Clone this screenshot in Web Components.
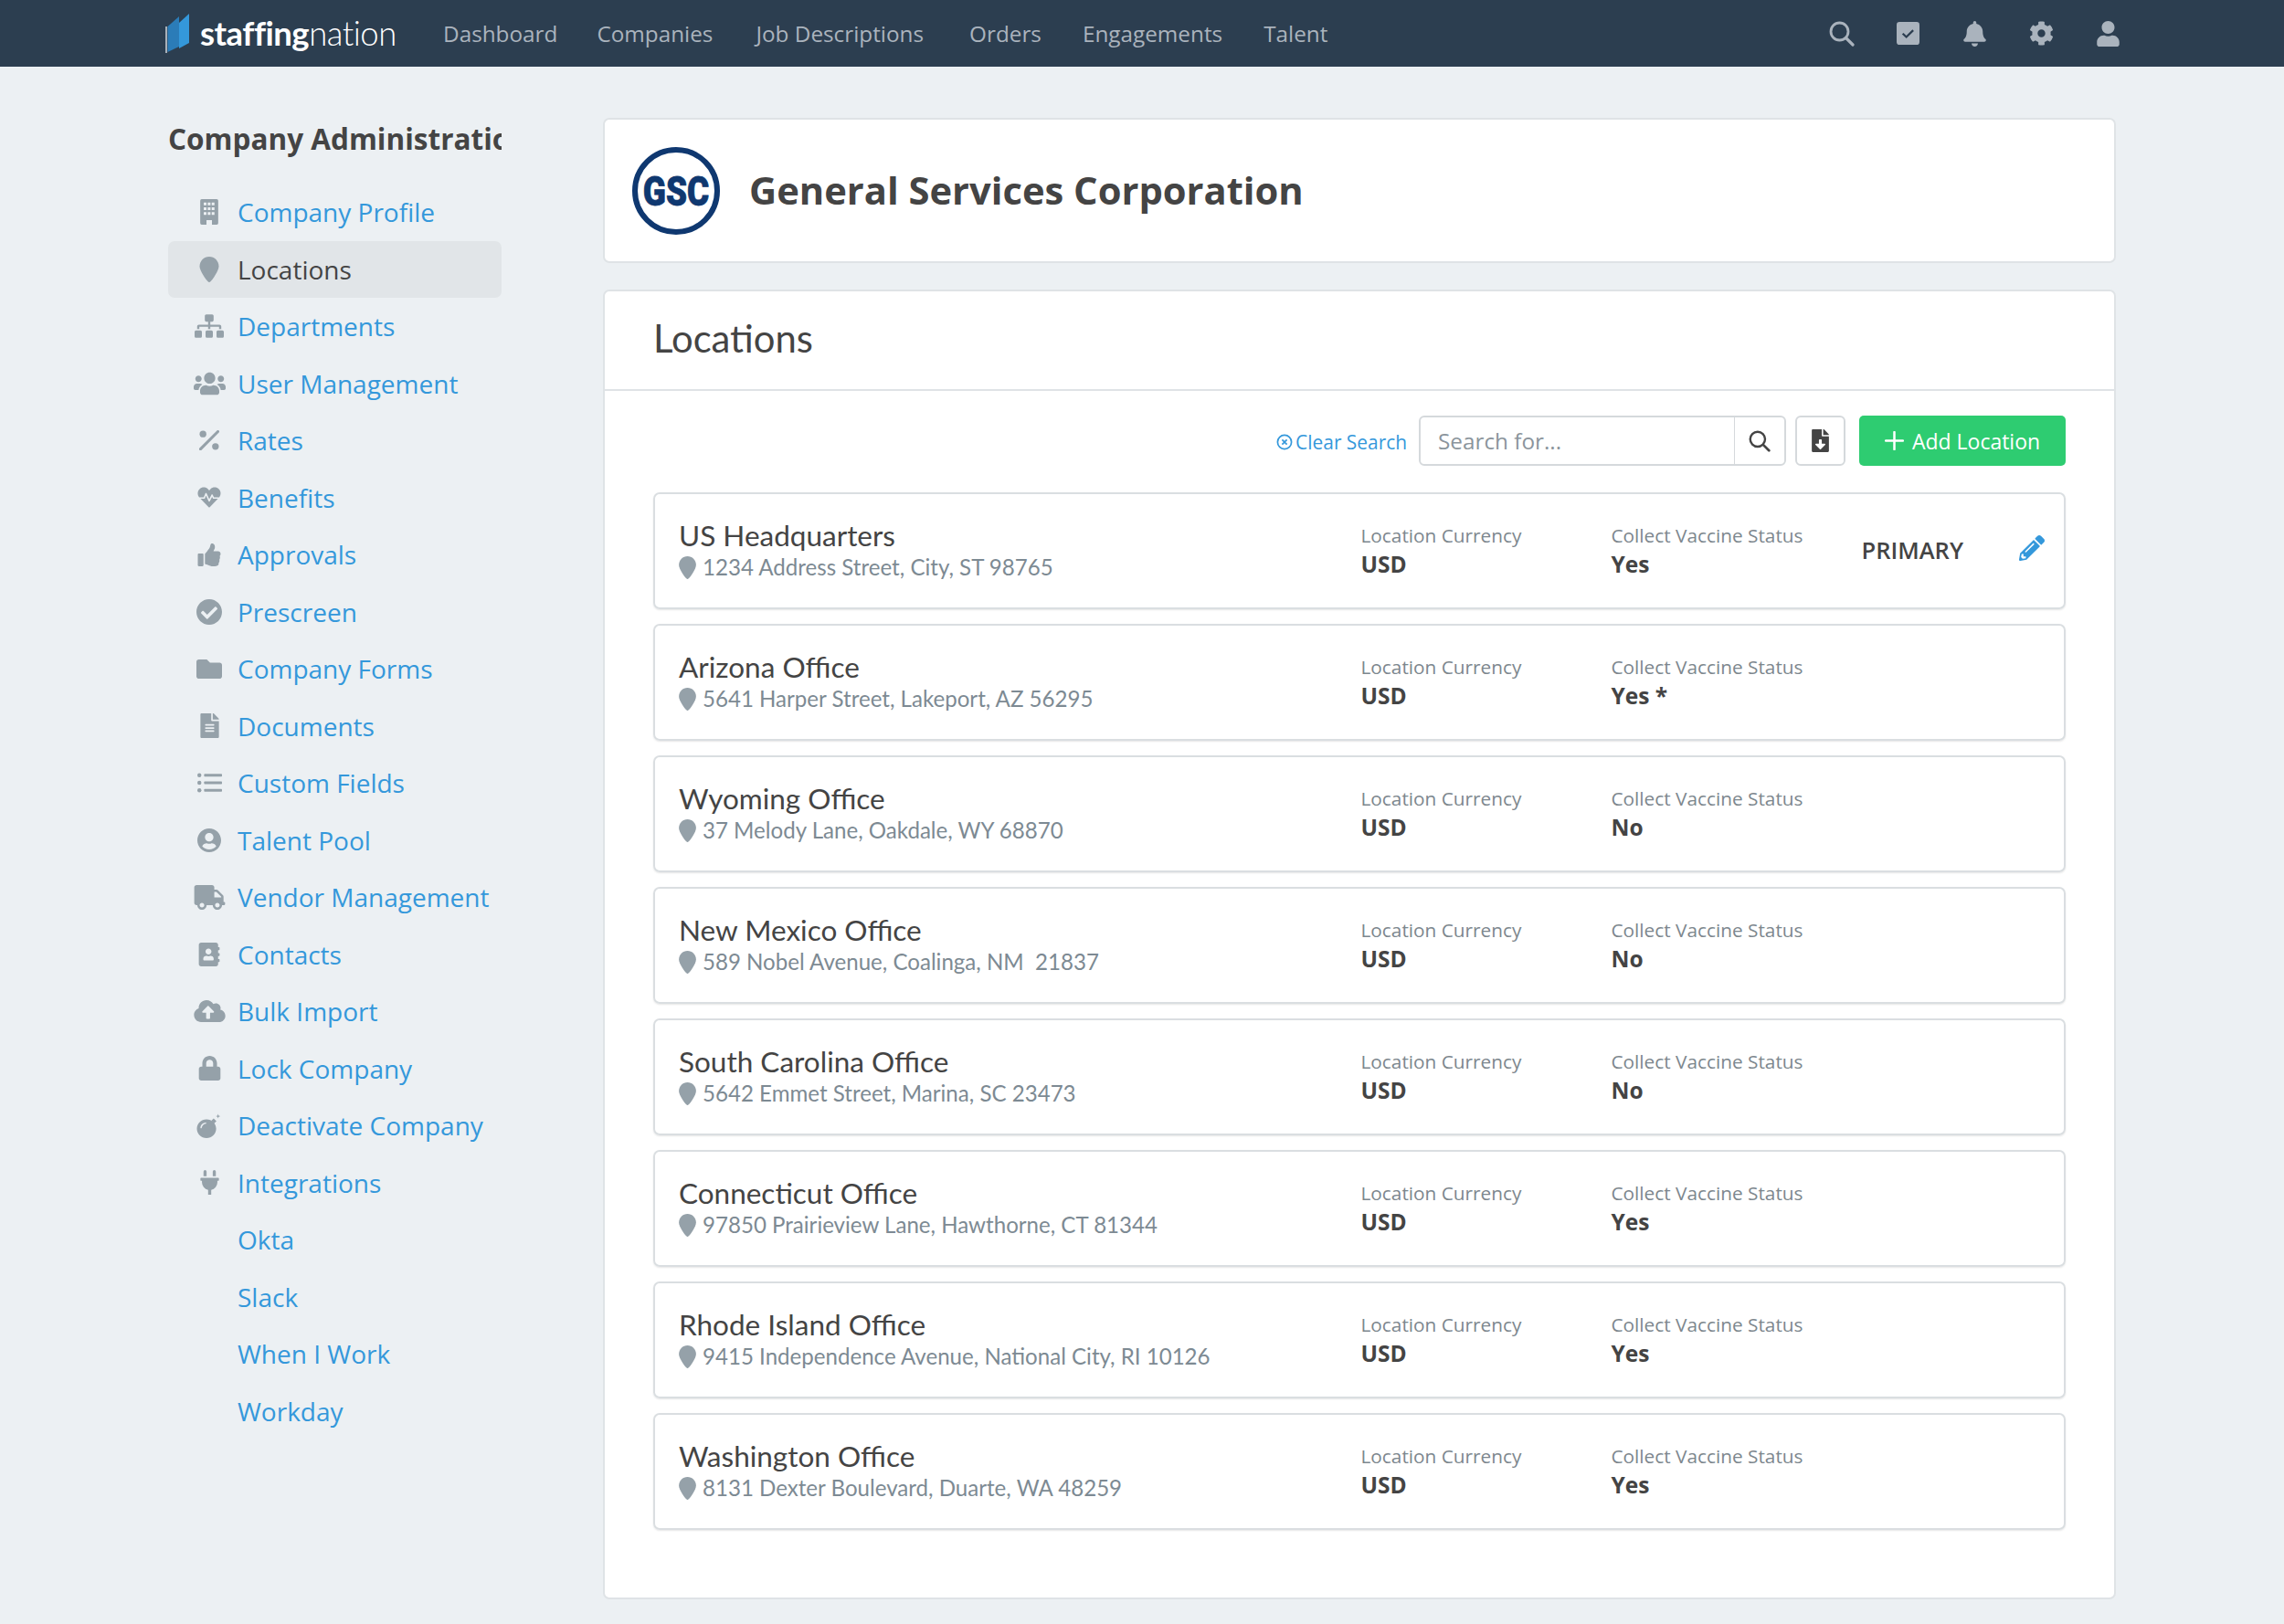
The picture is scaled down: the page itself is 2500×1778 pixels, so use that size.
<!DOCTYPE html>
<html lang="en">
<head>
<meta charset="utf-8">
<title>Locations</title>
<style>
  html, body { margin: 0; background: #ecf0f3; }
  body { font-family: "Open Sans", sans-serif; color: #444; }
</style>
</head>
<body>
<sn-app>
  <sn-topbar slot="top"></sn-topbar>
  <sn-side-nav slot="side" heading="Company Administration">
    <sn-nav-item icon="building" w="20" h="28">Company Profile</sn-nav-item>
    <sn-nav-item icon="pin" w="22" h="28" active>Locations</sn-nav-item>
    <sn-nav-item icon="sitemap" w="32" h="26">Departments</sn-nav-item>
    <sn-nav-item icon="users" w="35" h="28">User Management</sn-nav-item>
    <sn-nav-item icon="percent" w="22" h="22">Rates</sn-nav-item>
    <sn-nav-item icon="heartbeat" w="28" h="25">Benefits</sn-nav-item>
    <sn-nav-item icon="thumbs" w="28" h="25">Approvals</sn-nav-item>
    <sn-nav-item icon="check-circle" w="28" h="28">Prescreen</sn-nav-item>
    <sn-nav-item icon="folder" w="28" h="25">Company Forms</sn-nav-item>
    <sn-nav-item icon="file-alt" w="21" h="27">Documents</sn-nav-item>
    <sn-nav-item icon="list" w="27" h="22">Custom Fields</sn-nav-item>
    <sn-nav-item icon="user-circle" w="28" h="26">Talent Pool</sn-nav-item>
    <sn-nav-item icon="truck" w="35" h="27">Vendor Management</sn-nav-item>
    <sn-nav-item icon="contact" w="26" h="26">Contacts</sn-nav-item>
    <sn-nav-item icon="cloud" w="35" h="24">Bulk Import</sn-nav-item>
    <sn-nav-item icon="lock" w="25" h="27">Lock Company</sn-nav-item>
    <sn-nav-item icon="bomb" w="28" h="27">Deactivate Company</sn-nav-item>
    <sn-nav-item icon="plug" w="21" h="27">Integrations</sn-nav-item>
    <sn-nav-item>Okta</sn-nav-item>
    <sn-nav-item>Slack</sn-nav-item>
    <sn-nav-item>When I Work</sn-nav-item>
    <sn-nav-item>Workday</sn-nav-item>
  </sn-side-nav>
  <sn-company-header slot="main">General Services Corporation</sn-company-header>
  <sn-panel slot="main" heading="Locations">
    <sn-toolbar></sn-toolbar>
    <sn-location name="US Headquarters" address="1234 Address Street, City, ST 98765" vaccine="Yes" primary></sn-location>
    <sn-location name="Arizona Office" address="5641 Harper Street, Lakeport, AZ 56295" vaccine="Yes *"></sn-location>
    <sn-location name="Wyoming Office" address="37 Melody Lane, Oakdale, WY 68870" vaccine="No"></sn-location>
    <sn-location name="New Mexico Office" address="589 Nobel Avenue, Coalinga, NM  21837" vaccine="No"></sn-location>
    <sn-location name="South Carolina Office" address="5642 Emmet Street, Marina, SC 23473" vaccine="No"></sn-location>
    <sn-location name="Connecticut Office" address="97850 Prairieview Lane, Hawthorne, CT 81344" vaccine="Yes"></sn-location>
    <sn-location name="Rhode Island Office" address="9415 Independence Avenue, National City, RI 10126" vaccine="Yes"></sn-location>
    <sn-location name="Washington Office" address="8131 Dexter Boulevard, Duarte, WA 48259" vaccine="Yes"></sn-location>
  </sn-panel>
</sn-app>

<script>
// building windows are punched out of the block, easier to loop than to write by hand
let windows = '';
for (const y of [70, 165, 260]) {
  for (const x of [70, 150, 230]) windows += `M${x} ${y}h55v55h-55z`;
}

const ICONS = {
  building: ['0 0 360 512', `<path fill-rule="evenodd" d="M30 0h300a30 30 0 0 1 30 30v452a30 30 0 0 1-30 30h-95v-90h-110v90H30a30 30 0 0 1-30-30V30A30 30 0 0 1 30 0z${windows}"/>`],
  pin: ['0 0 384 512', '<path d="M192 0C86 0 0 86 0 192c0 90 120 260 172 312 11 11 29 11 40 0C264 452 384 282 384 192 384 86 298 0 192 0z"/>'],
  sitemap: ['0 0 640 512', '<path d="M128 352H32c-17.67 0-32 14.33-32 32v96c0 17.67 14.33 32 32 32h96c17.67 0 32-14.33 32-32v-96c0-17.67-14.33-32-32-32zm-24-80h192v48h48v-48h192v48h48v-57.59c0-21.17-17.23-38.41-38.41-38.41H344v-64h40c17.67 0 32-14.33 32-32V32c0-17.67-14.33-32-32-32H256c-17.67 0-32 14.33-32 32v96c0 17.67 14.33 32 32 32h40v64H94.41C73.23 224 56 241.23 56 262.41V320h48v-48zm264 80h-96c-17.67 0-32 14.33-32 32v96c0 17.67 14.33 32 32 32h96c17.67 0 32-14.33 32-32v-96c0-17.67-14.33-32-32-32zm240 0h-96c-17.67 0-32 14.33-32 32v96c0 17.67 14.33 32 32 32h96c17.67 0 32-14.33 32-32v-96c0-17.67-14.33-32-32-32z"/>'],
  users: ['0 0 640 512', '<path d="M96 224c35.3 0 64-28.7 64-64s-28.7-64-64-64-64 28.7-64 64 28.7 64 64 64zm448 0c35.3 0 64-28.7 64-64s-28.7-64-64-64-64 28.7-64 64 28.7 64 64 64zm32 32h-64c-17.6 0-33.5 7.1-45.1 18.6 40.3 22.1 68.9 62 75.1 109.4h66c17.7 0 32-14.3 32-32v-32c0-35.3-28.7-64-64-64zm-256 0c61.9 0 112-50.1 112-112S381.9 32 320 32 208 82.1 208 144s50.1 112 112 112zm76.8 32h-8.3c-20.8 10-43.9 16-68.5 16s-47.6-6-68.5-16h-8.3C179.6 288 128 339.6 128 403.2V432c0 26.5 21.5 48 48 48h288c26.5 0 48-21.5 48-48v-28.8c0-63.6-51.6-115.2-115.2-115.2zm-223.7-13.4C161.5 263.1 145.6 256 128 256H64c-35.3 0-64 28.7-64 64v32c0 17.7 14.3 32 32 32h65.9c6.3-47.4 34.9-87.3 75.2-109.4z"/>'],
  percent: ['0 0 448 448', '<circle cx="85" cy="85" r="75"/><circle cx="363" cy="363" r="75"/><path d="M30 420L418 30" stroke="currentColor" stroke-width="62" stroke-linecap="round"/>'],
  heartbeat: ['0 0 512 512', '<path d="M320.2 243.8l-49.7 99.4c-6 12.1-23.4 11.7-28.9-.6l-56.9-126.3-30 71.7H60.6l182.5 186.5c7.1 7.3 18.6 7.3 25.7 0L451.4 288H342.3l-22.1-44.2zM473.7 73.9l-2.4-2.5c-51.5-52.6-135.8-52.6-187.4 0L256 100l-27.9-28.5c-51.5-52.7-135.9-52.7-187.4 0l-2.4 2.4C-10.4 123.6-12.5 202.3 31 256h102.4l35.9-86.2c5.4-12.9 23.6-13.2 29.4-.4l58.2 129.3 49-97.9c5.9-11.8 22.7-11.8 28.6 0l27.6 55.2H481c43.5-53.7 41.4-132.4-7.3-182.1z"/>'],
  thumbs: ['0 0 512 512', '<path d="M104 224H24c-13.255 0-24 10.745-24 24v240c0 13.255 10.745 24 24 24h80c13.255 0 24-10.745 24-24V248c0-13.255-10.745-24-24-24zM384 81.452c0 42.416-25.97 66.208-33.277 94.548h101.723c33.397 0 59.397 27.746 59.553 58.098.084 17.938-7.546 37.249-19.439 49.197l-.11.11c9.836 23.337 8.237 56.037-9.308 79.469 8.681 25.895-.069 57.704-16.382 74.757 4.298 17.598 2.244 32.575-6.148 44.632C440.202 511.587 389.616 512 346.839 512l-2.845-.001c-48.287-.017-87.806-17.598-119.56-31.725-15.957-7.099-36.821-15.887-52.651-16.178-6.54-.12-11.783-5.457-11.783-11.998v-213.77c0-3.2 1.282-6.271 3.558-8.521 39.614-39.144 56.648-80.587 89.117-113.111 14.804-14.832 20.188-37.236 25.393-58.902C282.515 39.293 291.817 0 312 0c24 0 72 8 72 81.452z"/>'],
  'check-circle': ['8 8 496 496', '<path d="M504 256c0 136.967-111.033 248-248 248S8 392.967 8 256 119.033 8 256 8s248 111.033 248 248zM227.314 387.314l184-184c6.248-6.248 6.248-16.379 0-22.627l-22.627-22.627c-6.248-6.249-16.379-6.249-22.628 0L216 308.118l-70.059-70.059c-6.248-6.248-16.379-6.248-22.628 0l-22.627 22.627c-6.248 6.248-6.248 16.379 0 22.627l104 104c6.249 6.249 16.379 6.249 22.628.001z"/>'],
  folder: ['0 64 512 384', '<path d="M464 128H272l-64-64H48C21.49 64 0 85.49 0 112v288c0 26.51 21.49 48 48 48h416c26.51 0 48-21.49 48-48V176c0-26.51-21.49-48-48-48z"/>'],
  'file-alt': ['0 0 384 512', '<path d="M224 136V0H24C10.7 0 0 10.7 0 24v464c0 13.3 10.7 24 24 24h336c13.3 0 24-10.7 24-24V160H248c-13.2 0-24-10.8-24-24zm64 236c0 6.6-5.4 12-12 12H108c-6.6 0-12-5.4-12-12v-8c0-6.6 5.4-12 12-12h168c6.6 0 12 5.4 12 12v8zm0-64c0 6.6-5.4 12-12 12H108c-6.6 0-12-5.4-12-12v-8c0-6.6 5.4-12 12-12h168c6.6 0 12 5.4 12 12v8zm0-72v8c0 6.6-5.4 12-12 12H108c-6.6 0-12-5.4-12-12v-8c0-6.6 5.4-12 12-12h168c6.6 0 12 5.4 12 12zm96-114.1v6.1H256V0h6.1c6.4 0 12.5 2.5 17 7l97.9 98c4.5 4.5 7 10.6 7 16.9z"/>'],
  list: ['0 0 512 416', '<circle cx="42" cy="50" r="42"/><circle cx="42" cy="208" r="42"/><circle cx="42" cy="366" r="42"/><rect x="140" y="22" width="372" height="56" rx="14"/><rect x="140" y="180" width="372" height="56" rx="14"/><rect x="140" y="338" width="372" height="56" rx="14"/>'],
  'user-circle': ['0 8 496 496', '<path d="M248 8C111 8 0 119 0 256s111 248 248 248 248-111 248-248S385 8 248 8zm0 96c48.6 0 88 39.4 88 88s-39.4 88-88 88-88-39.4-88-88 39.4-88 88-88zm0 344c-58.7 0-111.3-26.6-146.5-68.2 18.8-35.4 55.6-59.8 98.5-59.8 2.4 0 4.8.4 7.1 1.1 13 4.2 26.6 6.9 40.9 6.9 14.3 0 28-2.7 40.9-6.9 2.3-.7 4.7-1.1 7.1-1.1 42.9 0 79.7 24.4 98.5 59.8C359.3 421.4 306.7 448 248 448z"/>'],
  truck: ['0 0 640 512', '<path d="M624 352h-16V243.9c0-12.7-5.1-24.9-14.1-33.9L494 110.1c-9-9-21.2-14.1-33.9-14.1H416V48c0-26.5-21.5-48-48-48H48C21.5 0 0 21.5 0 48v320c0 26.5 21.5 48 48 48h16c0 53 43 96 96 96s96-43 96-96h128c0 53 43 96 96 96s96-43 96-96h48c8.8 0 16-7.2 16-16v-32c0-8.8-7.2-16-16-16zM160 464c-26.5 0-48-21.5-48-48s21.5-48 48-48 48 21.5 48 48-21.5 48-48 48zm320 0c-26.5 0-48-21.5-48-48s21.5-48 48-48 48 21.5 48 48-21.5 48-48 48zm80-208H416V144h44.1l99.9 99.9V256z"/>'],
  contact: ['0 0 448 512', '<path d="M436 160c6.6 0 12-5.4 12-12v-40c0-6.6-5.4-12-12-12h-20V48c0-26.5-21.5-48-48-48H48C21.5 0 0 21.5 0 48v416c0 26.5 21.5 48 48 48h320c26.5 0 48-21.5 48-48v-48h20c6.6 0 12-5.4 12-12v-40c0-6.6-5.4-12-12-12h-20v-64h20c6.6 0 12-5.4 12-12v-40c0-6.6-5.4-12-12-12h-20v-64h20zm-228-32c35.3 0 64 28.7 64 64s-28.7 64-64 64-64-28.7-64-64 28.7-64 64-64zm112 236.8c0 10.6-10 19.2-22.4 19.2H118.4C106 384 96 375.4 96 364.8v-19.2c0-31.8 30.1-57.6 67.2-57.6h5c12.3 5.1 25.7 8 39.8 8s27.6-2.9 39.8-8h5c37.1 0 67.2 25.8 67.2 57.6v19.2z"/>'],
  cloud: ['0 32 640 448', '<path d="M537.6 226.6c4.1-10.7 6.4-22.4 6.4-34.6 0-53-43-96-96-96-19.7 0-38.1 6-53.3 16.2C367 64.2 315.3 32 256 32c-88.4 0-160 71.6-160 160 0 2.7.1 5.4.2 8.1C40.2 219.8 0 273.2 0 336c0 79.5 64.5 144 144 144h368c70.7 0 128-57.3 128-128 0-61.9-44-113.6-102.4-125.4zM393.4 288H328v112c0 8.8-7.2 16-16 16h-48c-8.8 0-16-7.2-16-16V288h-65.4c-14.3 0-21.4-17.2-11.3-27.3l105.4-105.4c6.2-6.2 16.4-6.2 22.6 0l105.4 105.4c10.1 10.1 2.9 27.3-11.3 27.3z"/>'],
  lock: ['0 0 448 512', '<path d="M400 224h-24v-72C376 68.2 307.8 0 224 0S72 68.2 72 152v72H48c-26.5 0-48 21.5-48 48v192c0 26.5 21.5 48 48 48h352c26.5 0 48-21.5 48-48V272c0-26.5-21.5-48-48-48zm-104 0H152v-72c0-39.7 32.3-72 72-72s72 32.3 72 72v72z"/>'],
  bomb: ['0 0 512 512', '<path fill-rule="evenodd" d="M200 124c110 0 200 86 200 194S310 512 200 512 0 426 0 318s90-194 200-194zM100 300c6-46 40-82 86-88 10-2 12-22 0-22-58 2-112 50-112 110 0 14 24 14 26 0z"/><path d="M300 150l48-48 58 58-48 48z"/><path d="M440 10l12 36 36 12-36 12-12 36-12-36-36-12 36-12z"/>'],
  plug: ['0 0 384 512', '<path d="M320 32a32 32 0 0 0-64 0v96h64zm48 128H16A16 16 0 0 0 0 176v32a16 16 0 0 0 16 16h16v32a160.07 160.07 0 0 0 128 156.8V512h64v-99.2A160.07 160.07 0 0 0 352 256v-32h16a16 16 0 0 0 16-16v-32a16 16 0 0 0-16-16zM128 32a32 32 0 0 0-64 0v96h64z"/>'],
  search: ['0 0 28 28', '<circle cx="11.5" cy="11.5" r="9.5" fill="none" stroke="currentColor" stroke-width="2.8"/><path d="M18.5 18.5L26 26" fill="none" stroke="currentColor" stroke-width="3.2" stroke-linecap="round"/>'],
  'check-box': ['0 0 24 24', '<rect width="24" height="24" rx="3"/><path d="M6.4 12.2l3.8 3.6 7.2-7" fill="none" stroke="#2c3e50" stroke-width="2.2"/>'],
  bell: ['0 0 448 512', '<path d="M224 512c35.32 0 63.97-28.65 63.97-64H160.03c0 35.35 28.65 64 63.97 64zm215.39-149.71c-19.32-20.76-55.47-51.99-55.47-154.29 0-77.7-54.48-139.9-127.94-155.16V32c0-17.67-14.32-32-31.98-32s-31.98 14.33-31.98 32v20.84C118.56 68.1 64.08 130.3 64.08 208c0 102.3-36.15 133.53-55.47 154.29-6 6.45-8.66 14.16-8.61 21.71.11 16.4 12.98 32 32.1 32h383.8c19.12 0 32-15.6 32.1-32 .05-7.55-2.61-15.27-8.61-21.71z"/>'],
  cog: ['0 0 512 512', '<path d="M487.4 315.7l-42.6-24.6c4.3-23.2 4.3-47 0-70.2l42.6-24.6c4.9-2.8 7.1-8.6 5.5-14-11.1-35.6-30-67.8-54.7-94.6-3.8-4.1-10-5.1-14.8-2.3L380.8 110c-17.9-15.4-38.5-27.3-60.8-35.1V25.8c0-5.6-3.9-10.5-9.4-11.7-36.7-8.2-74.3-7.8-109.2 0-5.5 1.2-9.4 6.1-9.4 11.7V75c-22.2 7.9-42.8 19.8-60.8 35.1L88.7 85.5c-4.9-2.8-11-1.9-14.8 2.3-24.7 26.7-43.6 58.9-54.7 94.6-1.7 5.4.6 11.2 5.5 14L67.3 221c-4.3 23.2-4.3 47 0 70.2l-42.6 24.6c-4.9 2.8-7.1 8.6-5.5 14 11.1 35.6 30 67.8 54.7 94.6 3.8 4.1 10 5.1 14.8 2.3l42.6-24.6c17.9 15.4 38.5 27.3 60.8 35.1v49.2c0 5.6 3.9 10.5 9.4 11.7 36.7 8.2 74.3 7.8 109.2 0 5.5-1.2 9.4-6.1 9.4-11.7v-49.2c22.2-7.9 42.8-19.8 60.8-35.1l42.6 24.6c4.9 2.8 11 1.9 14.8-2.3 24.7-26.7 43.6-58.9 54.7-94.6 1.5-5.5-.7-11.3-5.6-14.1zM256 336c-44.1 0-80-35.9-80-80s35.9-80 80-80 80 35.9 80 80-35.9 80-80 80z"/>'],
  user: ['0 0 448 512', '<path d="M224 256c70.7 0 128-57.3 128-128S294.7 0 224 0 96 57.3 96 128s57.3 128 128 128zm89.6 32h-16.7c-22.2 10.2-46.9 16-72.9 16s-50.6-5.8-72.9-16h-16.7C60.2 288 0 348.2 0 422.4V464c0 26.5 21.5 48 48 48h352c26.5 0 48-21.5 48-48v-41.6c0-74.2-60.2-134.4-134.4-134.4z"/>'],
  pencil: ['0 0 512 512', '<path d="M497.9 142.1l-46.1 46.1c-4.7 4.7-12.3 4.7-17 0l-111-111c-4.7-4.7-4.7-12.3 0-17l46.1-46.1c18.7-18.7 49.1-18.7 67.9 0l60.1 60.1c18.8 18.7 18.8 49.1 0 67.9zM284.2 99.8L21.6 362.4.4 483.9c-2.9 16.4 11.4 30.6 27.8 27.8l121.5-21.3 262.6-262.6c4.7-4.7 4.7-12.3 0-17l-111-111c-4.8-4.7-12.4-4.7-17.1 0zM124.1 339.9c-5.5-5.5-5.5-14.3 0-19.8l154-154c5.5-5.5 14.3-5.5 19.8 0s5.5 14.3 0 19.8l-154 154c-5.5 5.5-14.3 5.5-19.8 0zM88 424h48v36.3l-64.5 11.3-31.1-31.1L51.7 376H88v48z"/>'],
  'file-download': ['0 0 384 512', '<path d="M224 136V0H24C10.7 0 0 10.7 0 24v464c0 13.3 10.7 24 24 24h336c13.3 0 24-10.7 24-24V160H248c-13.2 0-24-10.8-24-24zm76.45 211.36l-96.42 95.7c-6.65 6.61-17.39 6.61-24.04 0l-96.42-95.7C73.42 337.29 80.54 320 94.82 320H160v-80c0-8.84 7.16-16 16-16h32c8.84 0 16 7.16 16 16v80h65.18c14.28 0 21.4 17.29 11.27 27.36zM377 105L279.1 7c-4.5-4.5-10.6-7-17-7H256v128h128v-6.1c0-6.3-2.5-12.4-7-16.9z"/>'],
  clear: ['0 0 18 18', '<circle cx="9" cy="9" r="7.6" fill="none" stroke="currentColor" stroke-width="1.7"/><path d="M6.4 6.4l5.2 5.2M11.6 6.4l-5.2 5.2" fill="none" stroke="currentColor" stroke-width="1.7"/>'],
  plus: ['0 0 20 20', '<path d="M10 1v18M1 10h18" fill="none" stroke="currentColor" stroke-width="2.4" stroke-linecap="round"/>']
};

class SnIcon extends HTMLElement {
  connectedCallback() {
    const [box, markup] = ICONS[this.getAttribute('name')];
    const w = this.getAttribute('w');
    const h = this.getAttribute('h') || w;
    const root = this.shadowRoot || this.attachShadow({ mode: 'open' });
    root.innerHTML = `
      <style>
        :host { display: inline-flex; flex: none; }
        svg { display: block; fill: currentColor; }
      </style>
      <svg width="${w}" height="${h}" viewBox="${box}">${markup}</svg>
    `;
  }
}

class SnApp extends HTMLElement {
  constructor() {
    super();
    this.attachShadow({ mode: 'open' }).innerHTML = `
      <style>
        :host { display: block; height: 1778px; overflow: hidden; }
        .body { display: flex; padding: 56px 0 0 184px; gap: 111px; }
        .side { display: block; width: 365px; flex: none; }
        .main { display: flex; flex-direction: column; gap: 29px; width: 1656px; }
      </style>
      <slot name="top"></slot>
      <div class="body">
        <div class="side"><slot name="side"></slot></div>
        <div class="main"><slot name="main"></slot></div>
      </div>
    `;
  }
}

class SnTopbar extends HTMLElement {
  constructor() {
    super();
    const links = ['Dashboard', 'Companies', 'Job Descriptions', 'Orders', 'Engagements', 'Talent'];
    this.attachShadow({ mode: 'open' }).innerHTML = `
      <style>
        :host {
          display: flex; align-items: center; height: 73px; background: #2c3e50;
          padding: 0 178px 0 181px; box-sizing: border-box; color: #aab3bd;
        }
        .logo { display: flex; align-items: center; gap: 11px; width: 304px; flex: none; color: #fff; font: 400 36.5px/1 Lato, sans-serif; letter-spacing: -.5px; }
        .logo b { font-weight: 700; }
        .logo span { font-weight: 300; }
        nav { display: flex; gap: 45px; flex: 1; font-size: 24.3px; }
        nav div:nth-child(2) { margin-left: -2px; }
        nav div:nth-child(3) { margin-left: 2px; }
        nav div:nth-child(4) { margin-left: 5px; }
        .icons { display: flex; align-items: center; gap: 44px; }
        .slot { display: flex; justify-content: center; width: 29px; }
      </style>
      <div class="logo">
        <svg width="27" height="44" viewBox="0 0 27 44">
          <path d="M1 14v29" stroke="#fff" stroke-width="1.2"/>
          <path d="M2.5 14L15 3v33L2.5 42z" fill="#2b7cb8"/>
          <path d="M15 10L26 0v32l-11 6z" fill="#3498db"/>
        </svg>
        <div><b>staffing</b><span>nation</span></div>
      </div>
      <nav>${links.map(l => `<div>${l}</div>`).join('')}</nav>
      <div class="icons">
        <div class="slot"><sn-icon name="search" w="28"></sn-icon></div>
        <div class="slot"><sn-icon name="check-box" w="25"></sn-icon></div>
        <div class="slot"><sn-icon name="bell" w="25" h="28"></sn-icon></div>
        <div class="slot"><sn-icon name="cog" w="27"></sn-icon></div>
        <div class="slot"><sn-icon name="user" w="25" h="28"></sn-icon></div>
      </div>
    `;
  }
}

class SnSideNav extends HTMLElement {
  constructor() {
    super();
    this.attachShadow({ mode: 'open' }).innerHTML = `
      <style>
        :host { display: block; }
        h2 {
          margin: 1px 0 27px; height: 44px; font: 700 31.5px/44px "Open Sans", sans-serif; color: #444;
          white-space: nowrap; overflow: hidden;
        }
      </style>
      <h2 id="t"></h2>
      <slot></slot>
    `;
    this.shadowRoot.getElementById('t').textContent = this.getAttribute('heading');
  }
}

class SnNavItem extends HTMLElement {
  constructor() {
    super();
    const icon = this.getAttribute('icon');
    const w = this.getAttribute('w');
    const h = this.getAttribute('h');
    this.attachShadow({ mode: 'open' }).innerHTML = `
      <style>
        :host {
          display: flex; align-items: center; height: 62.5px; border-radius: 7px;
          color: #3498db; font-size: 28px;
        }
        :host([active]) { background: #e1e5e8; color: #444; }
        .ico { display: flex; justify-content: center; width: 76px; padding-left: 14px; box-sizing: border-box; flex: none; color: #95a1a9; }
      </style>
      <div class="ico">${icon ? `<sn-icon name="${icon}" w="${w}" h="${h}"></sn-icon>` : ''}</div>
      <slot></slot>
    `;
  }
}

class SnCompanyHeader extends HTMLElement {
  constructor() {
    super();
    this.attachShadow({ mode: 'open' }).innerHTML = `
      <style>
        :host {
          display: flex; align-items: center; gap: 32px; height: 159px; box-sizing: border-box;
          background: #fff; border: 2px solid #dfe3e6; border-radius: 7px; padding-left: 30px;
        }
        h1 { margin: 0 0 2px; font: 700 41.7px/1 "Open Sans", sans-serif; color: #444; }
        svg { display: block; flex: none; }
      </style>
      <svg width="96" height="96" viewBox="0 0 96 96">
        <circle cx="48" cy="48" r="45" fill="#fff" stroke="#0f3870" stroke-width="6"/>
        <text transform="translate(48 64) scale(.82 1)" text-anchor="middle"
          font-family="Roboto, sans-serif" font-weight="900" font-size="45" fill="#0f3870" stroke="#0f3870" stroke-width=".8">GSC</text>
      </svg>
      <h1><slot></slot></h1>
    `;
  }
}

class SnPanel extends HTMLElement {
  constructor() {
    super();
    this.attachShadow({ mode: 'open' }).innerHTML = `
      <style>
        :host {
          display: block; background: #fff; border: 2px solid #dfe3e6; border-radius: 7px;
          box-sizing: border-box;
        }
        header {
          height: 109px; box-sizing: border-box; padding: 0 53px 3px; border-bottom: 2px solid #dfe3e6;
          display: flex; align-items: center; font: 400 41.8px/1 Lato, sans-serif; color: #444;
          font-variant-ligatures: common-ligatures discretionary-ligatures;
        }
        .body { display: flex; flex-direction: column; gap: 16px; padding: 27px 53px 74px; }
      </style>
      <header id="t"></header>
      <div class="body"><slot></slot></div>
    `;
    this.shadowRoot.getElementById('t').textContent = this.getAttribute('heading');
  }
}

class SnToolbar extends HTMLElement {
  constructor() {
    super();
    this.attachShadow({ mode: 'open' }).innerHTML = `
      <style>
        :host { display: flex; justify-content: flex-end; align-items: center; height: 55px; margin-bottom: 13px; }
        .clear { display: flex; align-items: center; gap: 3px; color: #3498db; font-size: 20.9px; margin-right: 13px; margin-top: 2px; }
        .search {
          display: flex; height: 55px; width: 402px; box-sizing: border-box;
          border: 2px solid #d5d9dc; border-radius: 6px; margin-right: 10px;
        }
        .input { flex: 1; display: flex; align-items: center; padding-left: 19px; font-size: 24.3px; color: #8b959c; }
        .go { width: 54px; display: flex; align-items: center; justify-content: center; border-left: 1px solid #d5d9dc; color: #444; }
        .file {
          display: flex; align-items: center; justify-content: center; width: 55px; height: 55px; box-sizing: border-box;
          border: 2px solid #d5d9dc; border-radius: 6px; margin-right: 15px; color: #444;
        }
        .add {
          display: flex; align-items: center; justify-content: center; gap: 9px; width: 226px; height: 55px;
          background: #2ecc71; border-radius: 5px; color: #fff; font-size: 23px;
        }
      </style>
      <div class="clear"><sn-icon name="clear" w="18"></sn-icon><span>Clear Search</span></div>
      <div class="search">
        <div class="input">Search for...</div>
        <div class="go"><sn-icon name="search" w="24"></sn-icon></div>
      </div>
      <div class="file"><sn-icon name="file-download" w="19" h="25"></sn-icon></div>
      <div class="add"><sn-icon name="plus" w="21"></sn-icon><span>Add Location</span></div>
    `;
  }
}

class SnLocation extends HTMLElement {
  constructor() {
    super();
    const primary = this.hasAttribute('primary');
    this.attachShadow({ mode: 'open' }).innerHTML = `
      <style>
        :host {
          display: flex; align-items: center; height: 128px; box-sizing: border-box;
          border: 2px solid #dadee1; border-radius: 7px; padding: 0 0 2px 26px;
          box-shadow: 0 1px 2px rgba(0,0,0,.1);
        }
        .who { width: 746.5px; flex: none; font-family: Lato, sans-serif; }
        .name { font-size: 31.5px; line-height: 38px; color: #444; }
        .addr { display: flex; align-items: center; gap: 7px; font-size: 24.1px; line-height: 32px; color: #7d8a93; }
        .addr sn-icon { color: #95a1a9; }
        .col { width: 274px; flex: none; }
        .lbl { font-size: 20.8px; line-height: 30px; color: #7d878e; }
        .val { font-size: 24.5px; line-height: 33px; font-weight: 700; color: #444; }
        .pri { width: 172px; flex: none; font-size: 25.5px; font-weight: 600; color: #444; }
        .pri, .edit { display: ${primary ? 'block' : 'none'}; }
        .edit { color: #3498db; }
      </style>
      <div class="who">
        <div class="name">${this.getAttribute('name')}</div>
        <div class="addr"><sn-icon name="pin" w="19" h="25"></sn-icon><span style="white-space:pre">${this.getAttribute('address')}</span></div>
      </div>
      <div class="col"><div class="lbl">Location Currency</div><div class="val">USD</div></div>
      <div class="col"><div class="lbl">Collect Vaccine Status</div><div class="val">${this.getAttribute('vaccine')}</div></div>
      <div class="pri">PRIMARY</div>
      <div class="edit"><sn-icon name="pencil" w="28"></sn-icon></div>
    `;
  }
}

customElements.define('sn-icon', SnIcon);
customElements.define('sn-app', SnApp);
customElements.define('sn-topbar', SnTopbar);
customElements.define('sn-side-nav', SnSideNav);
customElements.define('sn-nav-item', SnNavItem);
customElements.define('sn-company-header', SnCompanyHeader);
customElements.define('sn-panel', SnPanel);
customElements.define('sn-toolbar', SnToolbar);
customElements.define('sn-location', SnLocation);
</script>
</body>
</html>
